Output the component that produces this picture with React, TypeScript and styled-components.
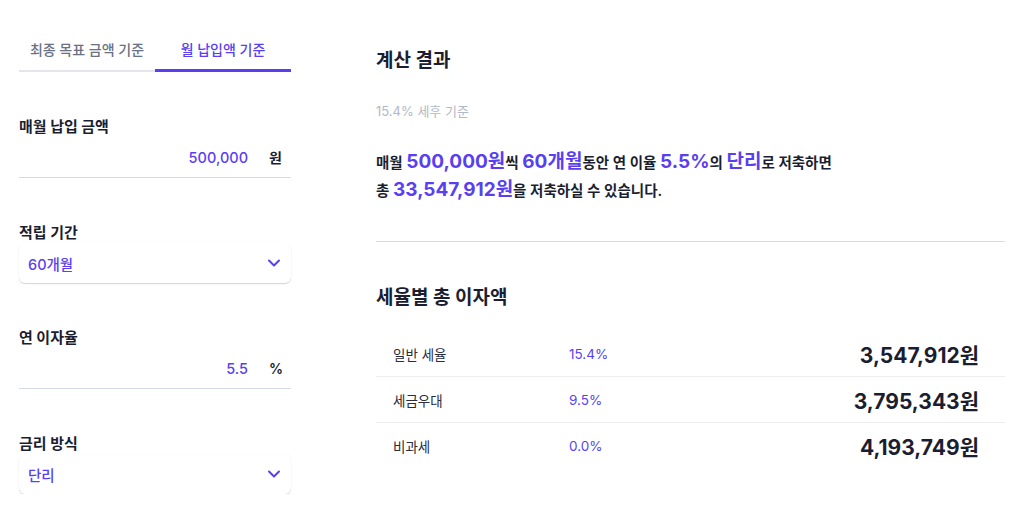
import React from "react";
import styled, { createGlobalStyle } from "styled-components";
import { ChevronDown } from "lucide-react";

const PURPLE = "#5a3ff2";
const DARK = "#1b1e30";

const GlobalStyle = createGlobalStyle`
  html, body {
    margin: 0;
    padding: 0;
    background: #ffffff;
  }
  body {
    font-family: "Inter", "Noto Sans CJK KR", sans-serif;
    color: ${DARK};
  }
  * { box-sizing: border-box; }
`;

const Page = styled.div`
  display: flex;
  gap: 85px;
  padding: 28px 19px 0 19px;
`;

const Form = styled.div`
  width: 272px;
  flex-shrink: 0;
  display: flex;
  flex-direction: column;
  gap: 45px;
`;

const Tabs = styled.div`
  display: flex;
  align-items: flex-end;
  height: 44px;
`;

const Tab = styled.button<{ $active?: boolean }>`
  flex: 1;
  height: 100%;
  border: none;
  background: none;
  padding: 0;
  font-family: inherit;
  font-size: 14px;
  font-weight: 500;
  color: ${(p) => (p.$active ? PURPLE : "#6b7185")};
  border-bottom: ${(p) => (p.$active ? `3px solid ${PURPLE}` : "2px solid #e3e6ee")};
  cursor: pointer;
`;

const Field = styled.div`
  display: flex;
  flex-direction: column;
`;

const Label = styled.div`
  font-size: 15px;
  font-weight: 700;
  line-height: 20px;
  color: ${DARK};
`;

const InputRow = styled.div`
  display: flex;
  align-items: center;
  height: 41px;
  border-bottom: 1px solid #d6dae7;
`;

const Value = styled.div`
  flex: 1;
  text-align: right;
  font-size: 14.5px;
  font-weight: 500;
  color: ${PURPLE};
`;

const Unit = styled.div`
  width: 22px;
  margin-left: 21px;
  font-size: 14px;
  font-weight: 600;
  color: ${DARK};
`;

const Select = styled.div`
  display: flex;
  align-items: center;
  justify-content: space-between;
  height: 40px;
  padding: 0 7px 0 9px;
  border-radius: 6px;
  box-shadow: 0 1px 1px rgba(90, 100, 200, 0.28), 0 0 2px rgba(0, 0, 0, 0.03);
  font-size: 14.5px;
  font-weight: 500;
  color: ${PURPLE};
`;

const Result = styled.div`
  flex: 1;
  padding-top: 19px;
  display: flex;
  flex-direction: column;
`;

const Heading = styled.h2`
  margin: 0;
  font-size: 19px;
  font-weight: 700;
  line-height: 28px;
  color: ${DARK};
`;

const Caption = styled.div`
  margin-top: 26px;
  font-size: 13px;
  line-height: 20px;
  color: #b3b8c8;
`;

const Summary = styled.p`
  margin: 27px 0 0 0;
  font-size: 14.5px;
  font-weight: 600;
  line-height: 27px;
  color: ${DARK};
`;

const Em = styled.span`
  font-size: 19px;
  font-weight: 700;
  color: ${PURPLE};
`;

const Divider = styled.hr`
  margin: 37px 0 0 0;
  border: none;
  border-top: 1px solid #d8dce8;
`;

const SubHeading = styled(Heading)`
  margin-top: 42px;
`;

const Table = styled.div`
  margin-top: 19px;
  display: flex;
  flex-direction: column;
`;

const Row = styled.div`
  display: flex;
  align-items: center;
  height: 46px;
  padding: 0 26px 0 17px;
  border-bottom: 1px solid #eceef3;
  &:last-child {
    border-bottom: none;
  }
`;

const RowLabel = styled.div`
  width: 176px;
  font-size: 13.5px;
  color: #2a2d3c;
`;

const Rate = styled.div`
  font-size: 13.5px;
  color: ${PURPLE};
`;

const Amount = styled.div`
  margin-left: auto;
  font-size: 21px;
  font-weight: 700;
  color: ${DARK};
`;

const rows = [
  { label: "일반 세율", rate: "15.4%", amount: "3,547,912원" },
  { label: "세금우대", rate: "9.5%", amount: "3,795,343원" },
  { label: "비과세", rate: "0.0%", amount: "4,193,749원" },
];

export default function App() {
  return (
    <>
      <GlobalStyle />
      <Page>
        <Form>
          <Tabs>
            <Tab>최종 목표 금액 기준</Tab>
            <Tab $active>월 납입액 기준</Tab>
          </Tabs>
          <Field>
            <Label>매월 납입 금액</Label>
            <InputRow>
              <Value>500,000</Value>
              <Unit>원</Unit>
            </InputRow>
          </Field>
          <Field>
            <Label>적립 기간</Label>
            <Select>
              <span>60개월</span>
              <ChevronDown size={20} strokeWidth={2.4} color={PURPLE} />
            </Select>
          </Field>
          <Field>
            <Label>연 이자율</Label>
            <InputRow>
              <Value>5.5</Value>
              <Unit>%</Unit>
            </InputRow>
          </Field>
          <Field>
            <Label>금리 방식</Label>
            <Select>
              <span>단리</span>
              <ChevronDown size={20} strokeWidth={2.4} color={PURPLE} />
            </Select>
          </Field>
        </Form>
        <Result>
          <Heading>계산 결과</Heading>
          <Caption>15.4% 세후 기준</Caption>
          <Summary>
            매월 <Em>500,000원</Em>씩 <Em>60개월</Em>동안 연 이율 <Em>5.5%</Em>의{" "}
            <Em>단리</Em>로 저축하면
            <br />총 <Em>33,547,912원</Em>을 저축하실 수 있습니다.
          </Summary>
          <Divider />
          <SubHeading>세율별 총 이자액</SubHeading>
          <Table>
            {rows.map((r) => (
              <Row key={r.label}>
                <RowLabel>{r.label}</RowLabel>
                <Rate>{r.rate}</Rate>
                <Amount>{r.amount}</Amount>
              </Row>
            ))}
          </Table>
        </Result>
      </Page>
    </>
  );
}
